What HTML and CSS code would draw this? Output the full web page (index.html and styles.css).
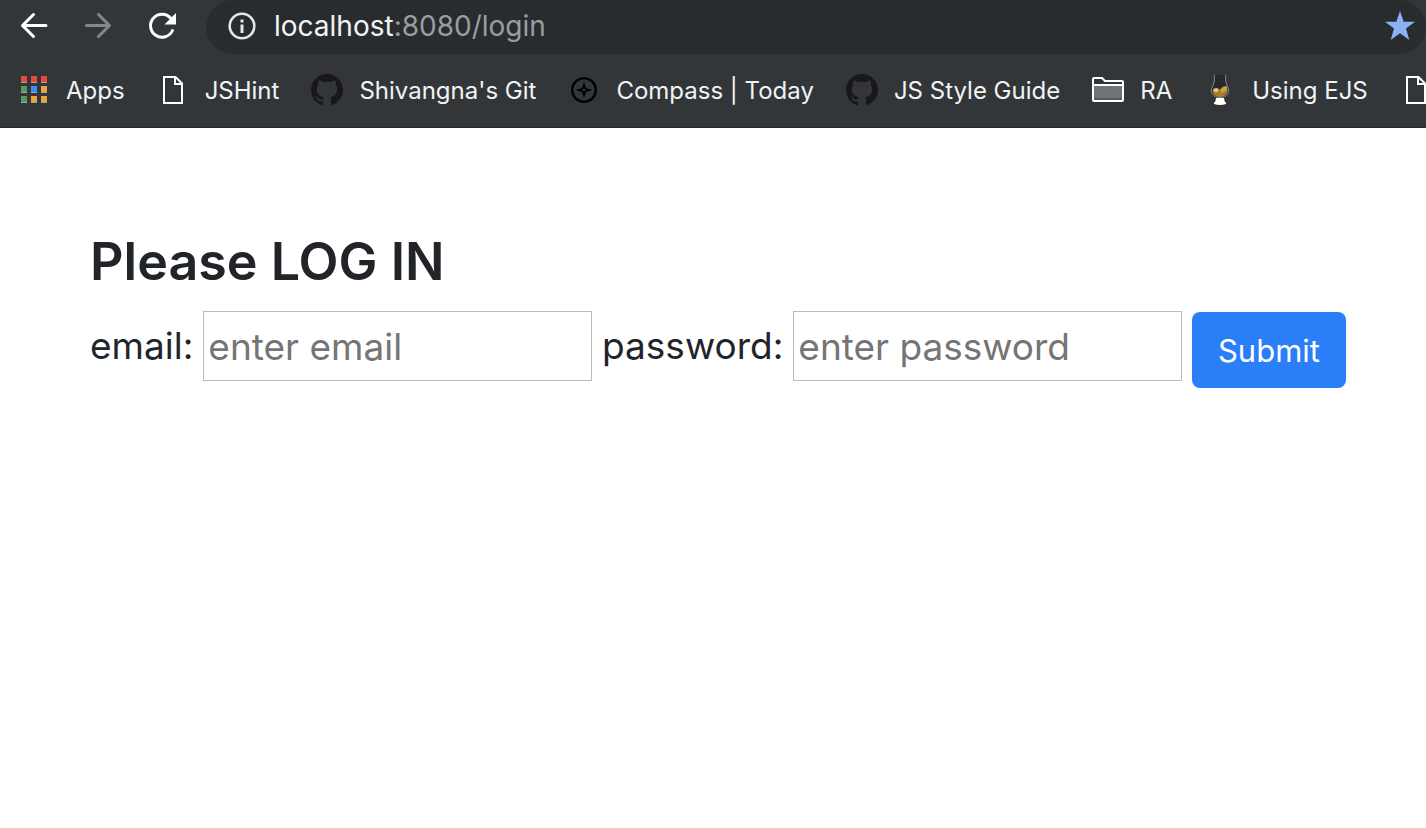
FILE: index.html
```html
<!DOCTYPE html>
<html lang="en">
<head>
<meta charset="utf-8">
<title>Log in</title>
<link rel="stylesheet" href="styles.css">
</head>
<body>
<svg class="defs" aria-hidden="true">
  <symbol id="page" viewBox="0 0 32 32"><path d="M7 3H18.500L25 9.500V29H7ZM18 3V10H25" fill="none" stroke="#fff" stroke-width="2"/></symbol>
  <symbol id="cat" viewBox="0 0 16 16"><path fill="#191717" d="M8 0C3.580 0 0 3.580 0 8c0 3.540 2.290 6.530 5.470 7.590.4.070.55-.17.55-.38 0-.19-.01-.82-.01-1.490-2.010.37-2.530-.49-2.690-.94-.09-.23-.48-.94-.82-1.130-.28-.15-.68-.52-.01-.53.63-.01 1.080.58 1.230.82.72 1.210 1.870.87 2.330.66.07-.52.28-.87.51-1.070-1.780-.2-3.640-.89-3.640-3.950 0-.87.31-1.590.82-2.150-.08-.2-.36-1.020.08-2.120 0 0 .67-.21 2.200.82.64-.18 1.320-.27 2-.27s1.360.09 2 .27c1.530-1.040 2.200-.82 2.200-.82.44 1.100.16 1.920.08 2.120.51.56.82 1.270.82 2.150 0 3.070-1.870 3.750-3.650 3.950.29.25.54.73.54 1.480 0 1.070-.01 1.930-.01 2.200 0 .21.15.46.55.38A8.010 8.010 0 0 0 16 8c0-4.420-3.580-8-8-8z"/></symbol>
</svg>
<header class="browser">
  <div class="toolbar">
    <nav class="controls" aria-label="History">
      <button class="control" type="button" aria-label="Back"><svg viewBox="0 0 32 32"><path d="M28 15.500H5M15.500 4.500L4.500 15.500l11 11" fill="none" stroke="#fff" stroke-width="3" stroke-linecap="round" stroke-linejoin="round"/></svg></button>
      <button class="control" type="button" aria-label="Forward" disabled><svg viewBox="0 0 32 32"><path d="M4.500 15.500H27M16.500 4.500L27.500 15.500l-11 11" fill="none" stroke="#85878a" stroke-width="3" stroke-linecap="round" stroke-linejoin="round"/></svg></button>
      <button class="control" type="button" aria-label="Reload"><svg viewBox="0 0 32 32"><path d="M25 8.500A11.500 11.500 0 1 0 26.500 20.500" fill="none" stroke="#fff" stroke-width="3" stroke-linecap="round"/><path d="M30 3v11.500H18.500Z" fill="#fff"/></svg></button>
    </nav>
    <div class="address">
      <svg class="info" viewBox="0 0 28 28"><circle cx="14" cy="14" r="12.300" fill="none" stroke="#e4e6e9" stroke-width="2.600"/><path d="M12.500 7.500h3v3h-3zM12.500 12.500h3v8.500h-3z" fill="#e4e6e9"/></svg>
      <span class="url">localhost<span class="path">:8080/login</span></span>
      <svg class="star" viewBox="0 0 30 30"><path d="M15 0l3.700 10.700H30L21 17.500 24.300 29 15 22.200 5.700 29 9 17.500 0 10.700h11.300z" fill="#8ab0f5"/></svg>
    </div>
  </div>
  <nav class="bookmarks" aria-label="Bookmarks">
    <a class="bookmark" href="#"><svg viewBox="0 0 32 32"><g fill="#a2a3a4"><path d="M3 8h6v1H3zM13 8h6v1h-6zM23 8h6v1h-6zM3 18h6v1H3zM13 18h6v1h-6zM23 18h6v1h-6zM3 28h6v1H3zM13 28h6v1h-6zM23 28h6v1h-6z"/></g><path d="M3 2h6v6H3zM13 2h6v6h-6zM23 2h6v6h-6z" fill="#e64a3c"/><path d="M3 12h6v6H3zM3 22h6v6H3z" fill="#529b5c"/><path d="M13 12h6v6h-6z" fill="#3d8bf0"/><path d="M23 12h6v6h-6zM13 22h6v6h-6zM23 22h6v6h-6z" fill="#e8a63a"/></svg>Apps</a>
    <a class="bookmark" href="#"><svg><use href="#page"/></svg>JSHint</a>
    <a class="bookmark" href="#"><svg><use href="#cat"/></svg>Shivangna's Git</a>
    <a class="bookmark" href="#"><svg viewBox="0 0 32 32"><circle cx="16" cy="16" r="11.800" fill="none" stroke="#000" stroke-width="2.400"/><path fill-rule="evenodd" d="M16 7.500l1.900 6.600L24.500 16l-6.600 1.900L16 24.500l-1.900-6.600L7.500 16l6.600-1.900zM16 14.600a1.400 1.400 0 1 0 0 2.800 1.400 1.400 0 0 0 0-2.800z"/></svg>Compass | Today</a>
    <a class="bookmark" href="#"><svg><use href="#cat"/></svg>JS Style Guide</a>
    <a class="bookmark" href="#"><svg viewBox="0 0 32 32"><path d="M2 10h28v17H2z" fill="#707476"/><path d="M2 6h8l3 3h17v2H2z" fill="#323639"/><path d="M2 24h28v2H2z" fill="#55595b"/><path d="M1 26V5q0-1 1-1h8l3 3h17q1 0 1 1v18q0 1-1 1H2q-1 0-1-1zM1 11h30" fill="none" stroke="#fff" stroke-width="2"/></svg>RA</a>
    <a class="bookmark" href="#"><svg viewBox="0 0 32 32"><path d="M10 1h12v10q3 4 2 8-3 4-8 4t-8-4q-1-4 2-8z" fill="#292a2b"/><path d="M9 15.500q4-2 7 0 3-4 7-3 2 6-2 9-5 3-10 0-3-2-2-6z" fill="#a67c2d"/><path d="M9 15.500q3-3 6 0l-2 3q-3 0-4-3z" fill="#e7c36f"/><path d="M17 15q3-4 6-2l-1 4-5 2z" fill="#c9a246"/><path d="M10.500 1Q11 8 8.500 12.500C5 18 9 23.500 16 23.500s11-5.500 7.500-11Q21 8 21.500 1" fill="none" stroke="#85878a"/><path d="M12 24h8l.5 3 1.500 2v1q-6 2-12 0v-1l1.500-2z" fill="#fff"/></svg>Using EJS</a>
    <a class="bookmark" href="#" aria-label="More"><svg><use href="#page"/></svg></a>
  </nav>
</header>
<main class="content">
  <h1 class="title">Please LOG IN</h1>
  <form class="login">
    <label class="label" for="email">email:</label>
    <input class="field" id="email" type="email" placeholder="enter email">
    <label class="label" for="password">password:</label>
    <input class="field" id="password" type="password" placeholder="enter password">
    <button class="submit" type="button">Submit</button>
  </form>
</main>
</body>
</html>
```
FILE: styles.css
```css
* { box-sizing: border-box; }
body {
  margin: 0;
  background: #fff;
  color: #212529;
  font-family: Inter, "Liberation Sans", sans-serif;
  overflow-x: hidden;
}
.defs { display: none; }
.browser {
  background: #323639;
  border-bottom: 1px solid #242628;
  overflow: hidden;
}
.toolbar { display: flex; height: 54px; }
.controls {
  display: flex;
  gap: 32px;
  padding: 0 28px 2px 18px;
  align-items: center;
}
.control {
  display: block;
  width: 32px;
  height: 32px;
  padding: 0;
  border: 0;
  background: none;
}
.control svg { display: block; }
.address {
  flex: 1;
  display: flex;
  align-items: center;
  gap: 18px;
  padding: 0 11px 2px 22px;
  background: #282c2f;
  border-radius: 28px;
}
.info { width: 28px; height: 28px; flex: none; }
.url { flex: 1; font-size: 28px; color: #f1f3f4; }
.path { color: #9a9da0; }
.star { width: 30px; height: 30px; flex: none; }
.bookmarks {
  display: flex;
  gap: 32px;
  height: 73px;
  padding: 0 0 1px 18px;
  align-items: center;
}
.bookmark {
  display: flex;
  flex: none;
  align-items: center;
  gap: 16px;
  color: #f1f3f4;
  font-size: 24px;
  text-decoration: none;
  white-space: nowrap;
}
.bookmark svg { width: 32px; height: 32px; flex: none; }
.content { padding: 100px 80px 0 90px; }
.title {
  margin: 0 0 16px;
  font-size: 52px;
  font-weight: 600;
  line-height: 67px;
}
.login {
  display: flex;
  align-items: flex-start;
  gap: 10px;
}
.label {
  font-size: 37px;
  line-height: 70px;
}
.field {
  flex: 1;
  min-width: 0;
  height: 70px;
  padding: 0 4px;
  border: 1px solid #bbb;
  border-radius: 0;
  font: 37px Inter, "Liberation Sans", sans-serif;
}
.field::placeholder { color: #757575; }
.submit {
  margin-top: 1px;
  width: 154px;
  height: 76px;
  padding: 0;
  border: 0;
  border-radius: 8px;
  background: #2a7ef7;
  color: #fff;
  font: 31px Inter, "Liberation Sans", sans-serif;
}
```
